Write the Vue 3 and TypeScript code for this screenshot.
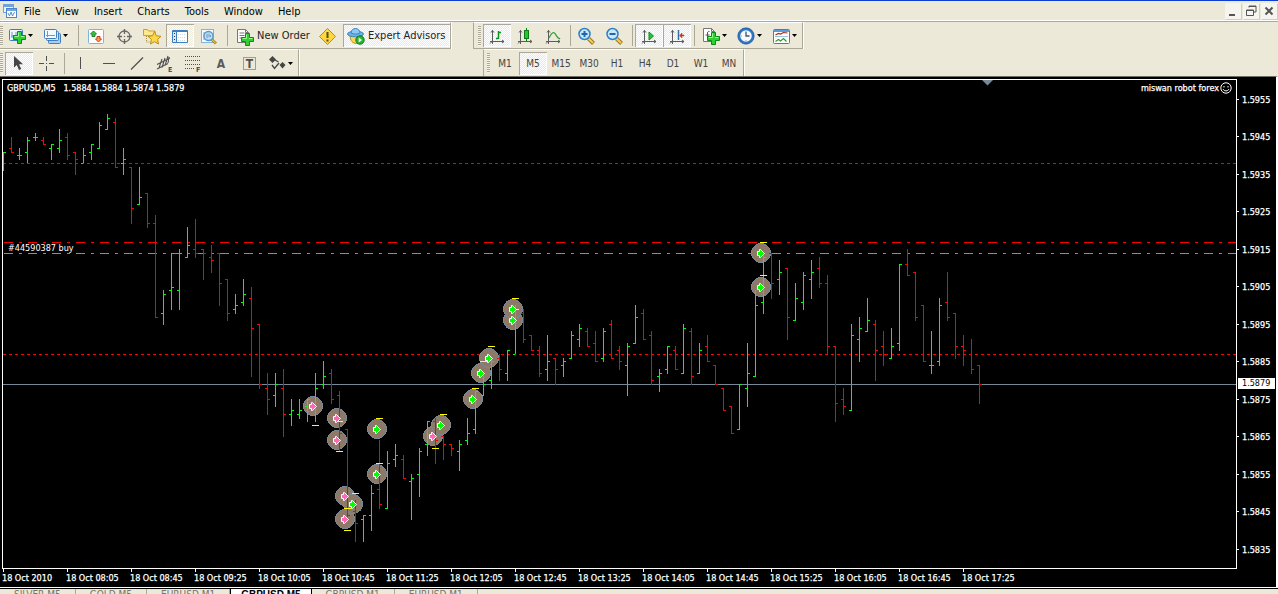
<script setup lang="ts">
interface Tool {
  icon?: string
  label?: string
  title: string
  pressed?: boolean
  menu?: boolean
  sep?: boolean
  kind?: string
}

const plus = (x: number, y: number) =>
  `<path transform="translate(${x} ${y})" d="M4.5 .5h4v4h4v4h-4v4h-4v-4h-4v-4h4z" fill="#2fd02f" stroke="#0a8a1a"/><path transform="translate(${x} ${y})" d="M5.5 1.5v4h-4M8 5.5h3.500" stroke="#9df59a" fill="none"/>`
const axes = '<path d="M5.500 4v14M3 15.500h14M4 6.500l1.500-2 1.500 2M15 14l2 1.500-2 1.500M3 17.500l2-2" stroke="#5c5c5c" fill="none"/>'
const lens = (sign: string) =>
  `<path d="M11.500 12.500l5 5" stroke="#9a7a20" stroke-width="4"/><path d="M11.500 12.500l4.500 4.500" stroke="#f3cf55" stroke-width="2"/><circle cx="7.500" cy="8" r="5.500" fill="#c9e8fb" stroke="#2f7fc4" stroke-width="1.500"/><path d="${sign}" stroke="#1f66ac" stroke-width="2"/>`

const icons: Record<string, string> = {
  app: '<rect x=".5" y=".5" width="10" height="8" fill="#eaf4ff" stroke="#6ea4dc"/><rect x="3.500" y="4.500" width="10" height="9" fill="#fff" stroke="#4a86cc"/><path d="M1 2h9M4 6h9" stroke="#4a86cc" stroke-width="1.500"/><path d="M5 9l1.500 3 1.500-4 1.500 4 2-4" stroke="#5a8fca" fill="none"/>',
  newChart: '<rect x="2.500" y="3.500" width="13" height="11" rx="1" fill="#eef7ff" stroke="#3f7fc0"/><path d="M5 6v6M4 10h9M9 6v3" stroke="#6b9cc8" fill="none"/>' + plus(6, 5),
  profiles: '<rect x="6.500" y="7.500" width="12" height="10" rx="1" fill="#a9cff0" stroke="#3f7fc0"/><rect x="4.500" y="5.500" width="12" height="9" rx="1" fill="#cfe5f8" stroke="#3f7fc0"/><rect x="2.500" y="3.500" width="12" height="9" rx="1" fill="#f2f9ff" stroke="#3f7fc0"/><path d="M5.500 5v6M4 9.500h9" stroke="#6b9cc8" fill="none"/>',
  market: '<rect x="2.500" y="3.500" width="15" height="14" rx="1" fill="#fff" stroke="#7db4e0"/><path d="M7.500 5l3 3H9v2.500H6V8H4.500z" fill="#35c440" stroke="#128a22"/><path d="M12.500 16L9.500 13H11v-2.500h3V13h1.500z" fill="#ff9a50" stroke="#d03a18"/>',
  data: '<circle cx="10.500" cy="10.500" r="5.500" fill="none" stroke="#666" stroke-width="1.300"/><path d="M10.500 3v5M10.500 13v5M3 10.500h5M13 10.500h5M10.500 10v1" stroke="#666" stroke-width="1.300"/>',
  navigator: '<path d="M1.500 9.500v-6h4l1 1.500h6.500v5z" fill="#ffe98c" stroke="#c9a02a"/><path d="M4.500 10v6h3" stroke="#a68b3a" stroke-dasharray="1 1" fill="none"/><path d="M12.500 5.500l1.900 4.300 4.600.5-3.400 3.100.9 4.600-4-2.300-4 2.300.9-4.600L6 10.300l4.600-.5z" fill="#ffd845" stroke="#b98d1c"/>',
  terminal: '<rect x="2" y="4" width="16" height="13" rx="1" fill="#3d7dc4"/><rect x="3" y="6" width="3" height="10" fill="#d6e9fa"/><rect x="7" y="6" width="10" height="10" fill="#fff"/><path d="M8 8.500h8M8 11.500h8M8 14.500h8" stroke="#c9dbea" stroke-dasharray="1 1"/><path d="M4.500 7v8" stroke="#333" stroke-dasharray="1 2"/>',
  tester: '<rect x="3.500" y="3.500" width="12" height="13" fill="#f4faff" stroke="#7db4e0"/><path d="M6 6v8M9 5v8" stroke="#88aacc"/><path d="M13 13l5 4.500" stroke="#b08a28" stroke-width="3"/><path d="M13 13l4.500 4" stroke="#f3cf55"/><circle cx="10.500" cy="10" r="4.500" fill="#b8dcf5" fill-opacity=".85" stroke="#5a94c8" stroke-width="1.300"/><path d="M9 8v4M11 7.500v4M12.500 9v2" stroke="#6c9ac0"/>',
  order: '<path d="M2.500 3.500h8l3 3v10h-11z" fill="#fff" stroke="#777"/><path d="M10.500 3.500v3h3M4.500 7h5M4.500 9.500h5M4.500 12h3" stroke="#777" fill="none"/>' + plus(6, 7),
  meta: '<path d="M10.500 2.500l8 8-8 8-8-8z" fill="#ffd840" stroke="#b98d1c" stroke-linejoin="round"/><path d="M10.500 6v6M10.500 13.500v2" stroke="#5a4a14" stroke-width="2"/>',
  advisor: '<path d="M4 9c0 6 3 8.500 6.500 8.500S16 15 16 9z" fill="#ffd650" stroke="#b98d1c"/><ellipse cx="9.500" cy="8" rx="8" ry="2.800" fill="#6cb4e8" stroke="#3a84bc"/><path d="M5 7c0-6 9-6 9 0-2 1.500-7 1.500-9 0z" fill="#8ccaf2" stroke="#3a84bc"/><circle cx="14" cy="14" r="4.200" fill="#27b52f" stroke="#0d7c18"/><path d="M12.700 11.500v5l3.300-2.500z" fill="#fff"/>',
  bars: axes + '<path d="M11.500 5v8M9 12.500h2M12 6.500h2" stroke="#0d9020" stroke-width="1.500" fill="none"/>',
  candles: axes + '<path d="M11.500 2v13" stroke="#0d7c18"/><rect x="9.500" y="4.500" width="4" height="8" fill="#27c533" stroke="#0d7c18"/>',
  line: axes + '<path d="M6 12c3-6 5-7 7-3s3 3 4 4" stroke="#2aa030" stroke-width="1.300" fill="none"/>',
  zoomIn: lens('M4.500 8h6M7.500 5v6'),
  zoomOut: lens('M4.500 8h6'),
  scroll: axes + '<path d="M10 6v8l4.500-4z" fill="#27c533" stroke="#0d8a1c"/>',
  shift: axes + '<path d="M11.500 4v10" stroke="#2a6fa8" stroke-width="1.500"/><path d="M12.500 9.500l2.500-2.500v2h2v1h-2v2z" fill="#c43c18" stroke="#c43c18" stroke-width=".5"/>',
  indicators: '<path d="M2.500 2.500h8l3 3v10h-11z" fill="#fff" stroke="#777"/><path d="M10.500 2.500v3h3" stroke="#777" fill="none"/><path d="M8.500 5.500c-2-.5-2 1-2 2.500v5M4.500 9h4" stroke="#555" fill="none"/>' + plus(6, 6),
  clock: '<circle cx="10" cy="10" r="7" fill="#f4faff" stroke="#2d74c4" stroke-width="2.500"/><circle cx="10" cy="10" r="8.200" fill="none" stroke="#1a4f94" stroke-width=".6"/><path d="M10 5.500V10h3.500" stroke="#456" stroke-width="1.300" fill="none"/><path d="M10 14v1M5 10h1" stroke="#89a"/>',
  template: '<rect x="2.500" y="3.500" width="16" height="14" rx="1" fill="#fff" stroke="#3f7fc0"/><path d="M3 5h15" stroke="#5a9ade" stroke-width="2"/><path d="M4 10.500h13" stroke="#9ac0e2"/><path d="M4.500 9l3-1.500 2 .5 3-1.500 4 .5" stroke="#a03018" fill="none" stroke-width="1.200"/><path d="M4.500 15.500l3-2 2 1.500 3-2.500 3 3" stroke="#2a9a38" fill="none" stroke-width="1.200"/>',
  cursor: '<path d="M5 3v11.500l2.800-2.500 2.200 5 2.200-1-2.200-4.800H14z" fill="#454545"/>',
  cross: '<path d="M9.500 3v5M9.500 13v5M2 10.500h5M12 10.500h5M9 10.500h1" stroke="#505050"/>',
  vline: '<path d="M9.500 4v12" stroke="#505050"/>',
  hline: '<path d="M4 10.500h12" stroke="#505050"/>',
  trend: '<path d="M4 16.500L16 4.500" stroke="#505050" stroke-width="1.200"/>',
  channel: '<path d="M2 11.500L15 5M2 16L13 10.500M4 15l3-9M7 14.500l3-9.500M10 12.500l3-9.500M13 10l1-6" stroke="#505050" stroke-width="1.100" fill="none"/><text x="13" y="19" font-size="7" font-weight="700" fill="#505050">E</text>',
  fibo: '<path d="M2 3.500h15M2 7.500h15M2 11.500h15M2 15.500h9" stroke="#505050" stroke-dasharray="1 1"/><text x="13" y="19" font-size="7" font-weight="700" fill="#505050">F</text>',
  text: '<text x="10" y="15" font-size="12" font-weight="700" text-anchor="middle" fill="#5a5a5a">A</text>',
  label: '<rect x="4.500" y="4.500" width="12" height="12" fill="none" stroke="#505050" stroke-dasharray="1 1"/><text x="10.500" y="15" font-size="12" font-weight="700" text-anchor="middle" fill="#505050">T</text>',
  arrows: '<path d="M5.500 3l3.500 3.500-3.500 3.500L2 6.500z" fill="#454545"/><path d="M15.500 9l3 3-3 3.500-3-3.500z" fill="#454545"/><path d="M8 7l3.500 2M5 12l2.500 3.500L12 10" stroke="#454545" fill="none" stroke-width="1.300"/>',
}

const sep: Tool = { title: '', sep: true }

const standard: Tool[] = [
  { icon: 'newChart', title: 'New Chart', menu: true },
  { icon: 'profiles', title: 'Profiles', menu: true },
  sep,
  { icon: 'market', title: 'Market Watch' },
  { icon: 'data', title: 'Data Window' },
  { icon: 'navigator', title: 'Navigator' },
  { icon: 'terminal', title: 'Terminal', pressed: true },
  { icon: 'tester', title: 'Strategy Tester' },
  sep,
  { icon: 'order', title: 'New Order', label: 'New Order', kind: 'order' },
  { icon: 'meta', title: 'MetaEditor' },
  { icon: 'advisor', title: 'Expert Advisors', label: 'Expert Advisors', pressed: true, kind: 'advisor' },
]

const charting: Tool[] = [
  { icon: 'bars', title: 'Bar Chart', pressed: true },
  { icon: 'candles', title: 'Candlesticks' },
  { icon: 'line', title: 'Line Chart' },
  sep,
  { icon: 'zoomIn', title: 'Zoom In' },
  { icon: 'zoomOut', title: 'Zoom Out' },
  sep,
  { icon: 'scroll', title: 'Auto Scroll', pressed: true },
  { icon: 'shift', title: 'Chart Shift', pressed: true },
  sep,
  { icon: 'indicators', title: 'Indicators', menu: true },
  { icon: 'clock', title: 'Periods', menu: true },
  { icon: 'template', title: 'Templates', menu: true },
]

const drawing: Tool[] = [
  { icon: 'cursor', title: 'Cursor', pressed: true },
  { icon: 'cross', title: 'Crosshair' },
  sep,
  { icon: 'vline', title: 'Vertical Line' },
  { icon: 'hline', title: 'Horizontal Line' },
  { icon: 'trend', title: 'Trendline' },
  { icon: 'channel', title: 'Equidistant Channel' },
  { icon: 'fibo', title: 'Fibonacci Retracement' },
  { icon: 'text', title: 'Text' },
  { icon: 'label', title: 'Text Label' },
  { icon: 'arrows', title: 'Arrows', menu: true },
]

const periods: Tool[] = ['M1', 'M5', 'M15', 'M30', 'H1', 'H4', 'D1', 'W1', 'MN'].map(p => ({
  title: p,
  label: p,
  pressed: p === 'M5',
  kind: 'period',
}))

const rows = [
  [
    { name: 'standard', tools: standard },
    { name: 'charting', tools: charting },
  ],
  [
    { name: 'drawing', tools: drawing },
    { name: 'periods', tools: periods },
  ],
]

const menus = ['File', 'View', 'Insert', 'Charts', 'Tools', 'Window', 'Help']

// high, low, open, close: vertical positions on the chart canvas
const quotes: number[][] = [
  [152, 170, 170, 152], [137, 152, 148, 152], [148, 159, 155, 155], [137, 162, 152, 140], [133, 140, 137, 137],
  [137, 144, 140, 144], [144, 159, 148, 144], [129, 152, 148, 140], [133, 159, 137, 155], [152, 174, 152, 159],
  [148, 162, 163, 155], [144, 159, 152, 144], [122, 148, 148, 125], [114, 129, 129, 118], [118, 167, 122, 167],
  [148, 174, 163, 159], [167, 223, 167, 208], [167, 204, 204, 197], [193, 227, 193, 223], [215, 317, 223, 317],
  [290, 324, 313, 294], [253, 309, 290, 287], [249, 309, 290, 253], [227, 257, 257, 245], [219, 257, 249, 253],
  [249, 279, 249, 253], [245, 272, 257, 260], [253, 305, 253, 283], [279, 320, 279, 313], [294, 313, 309, 305],
  [279, 305, 302, 294], [287, 376, 298, 328], [324, 388, 324, 384], [373, 414, 388, 399], [373, 406, 395, 384],
  [369, 436, 388, 414], [399, 425, 414, 410], [399, 418, 414, 410], [399, 421, 406, 399], [373, 421, 406, 388],
  [361, 388, 384, 376], [369, 403, 373, 399], [391, 450, 395, 433], [429, 516, 429, 515], [500, 541, 511, 523],
  [515, 541, 519, 515], [485, 530, 515, 493], [440, 508, 489, 504], [451, 508, 508, 463], [444, 466, 459, 455],
  [455, 478, 459, 478], [474, 519, 481, 478], [448, 496, 474, 451], [421, 455, 444, 421], [418, 463, 421, 440],
  [436, 459, 436, 444], [444, 455, 444, 448], [440, 470, 451, 444], [418, 444, 440, 433], [391, 433, 429, 391],
  [375, 395, 395, 384], [360, 388, 380, 361], [354, 380, 358, 369], [350, 380, 373, 350], [305, 353, 354, 309],
  [309, 342, 313, 339], [335, 350, 335, 350], [346, 376, 350, 373], [335, 380, 369, 361], [358, 384, 358, 369],
  [358, 376, 365, 361], [331, 358, 358, 335], [324, 346, 339, 328], [328, 346, 331, 346], [331, 361, 343, 361],
  [328, 361, 358, 331], [320, 358, 324, 358], [346, 369, 350, 361], [343, 395, 365, 346], [305, 343, 343, 317],
  [309, 339, 313, 339], [331, 384, 335, 380], [369, 391, 376, 373], [346, 373, 369, 346], [346, 369, 350, 369],
  [324, 373, 373, 328], [328, 384, 331, 376], [343, 373, 373, 350], [335, 361, 346, 361], [365, 384, 365, 384],
  [388, 410, 388, 410], [406, 433, 406, 433], [384, 429, 429, 384], [343, 406, 388, 373], [290, 376, 376, 305],
  [255, 313, 302, 257], [253, 298, 253, 283], [260, 294, 279, 272], [268, 339, 268, 317], [283, 320, 320, 298],
  [272, 309, 302, 275], [260, 298, 279, 272], [257, 287, 268, 283], [275, 354, 283, 346], [346, 421, 346, 403],
  [388, 414, 399, 406], [324, 410, 410, 335], [317, 361, 339, 328], [298, 331, 331, 320], [320, 380, 324, 350],
  [331, 365, 346, 354], [328, 358, 358, 346], [264, 350, 343, 264], [249, 275, 264, 275], [272, 320, 272, 317],
  [305, 361, 305, 361], [331, 373, 365, 365], [298, 365, 361, 305], [272, 320, 302, 317], [313, 358, 313, 346],
  [335, 365, 346, 350], [339, 373, 354, 369], [365, 403, 365, 384],
]

const barPath = (up: boolean) =>
  quotes
    .map(([h, l, o, c], i) => {
      if (c <= o !== up) return ''
      const x = 3 + i * 8
      return `M${x} ${h}h1V${l + 1}h-1zM${x - 2} ${o}h2v1h-2zM${x + 1} ${c}h2v1h-2z`
    })
    .join('')

const upBars = barPath(true)
const downBars = barPath(false)

const signals: [number, number, 'buy' | 'sell'][] = [
  [313, 406, 'sell'], [337, 418, 'sell'], [337, 440, 'sell'], [377, 429, 'buy'], [377, 474, 'buy'],
  [345, 496, 'sell'], [345, 519, 'sell'], [353, 504, 'buy'], [433, 436, 'sell'], [441, 425, 'buy'],
  [473, 399, 'buy'], [481, 373, 'buy'], [489, 358, 'buy'], [513, 320, 'buy'], [513, 309, 'buy'],
  [761, 253, 'buy'], [761, 287, 'buy'],
]

const levels: [number, number][] = [
  [315, 425], [339, 421], [339, 451], [379, 418], [379, 463], [355, 493], [347, 508], [347, 530], [435, 448],
  [443, 414], [475, 388], [483, 361], [491, 346], [515, 298], [515, 309], [763, 242], [763, 275],
]
const levelPath = levels.map(([x, y]) => `M${x - 3} ${y}h7v1h-7z`).join('')

const priceTop = (p: number) => Math.round(20 + (1.5955 - p) * 37500)
const prices = Array.from({ length: 13 }, (_, i) => 1.5955 - i * 0.001)

const times = ['2010', '08:05', '08:45', '09:25', '10:05', '10:45', '11:25', '12:05', '12:45', '13:25', '14:05', '14:45', '15:25', '16:05', '16:45', '17:25']

const tabs = ['SILVER,M5', 'GOLD,M5', 'EURUSD,M1', 'GBPUSD,M5', 'GBPUSD,M1', 'EURUSD,M1']
</script>

<template>
  <div class="terminal">
    <header class="menubar">
      <svg class="app-icon" width="14" height="14" v-html="icons.app" />
      <nav class="menus">
        <button v-for="m in menus" :key="m" type="button" class="menu">{{ m }}</button>
      </nav>
      <div class="window-buttons">
        <button type="button" aria-label="Minimize"><svg width="16" height="16"><path d="M4 11h6v2H4z" fill="#555" /></svg></button>
        <button type="button" aria-label="Restore"><svg width="16" height="16"><path d="M6 4.500V3h7v6h-2M3.500 7h7v5.500h-7z M3.500 7.500h7M6 3.500h7" fill="none" stroke="#555" /></svg></button>
        <button type="button" aria-label="Close"><svg width="16" height="16"><path d="M4.500 4.500l7 7M11.500 4.500l-7 7" stroke="#555" stroke-width="2" /></svg></button>
      </div>
    </header>

    <div v-for="(row, r) in rows" :key="r" class="toolrow">
      <div v-for="bar in row" :key="bar.name" class="toolbar" :class="bar.name" role="toolbar">
        <span class="grip"></span>
        <template v-for="(t, i) in bar.tools" :key="i">
          <span v-if="t.sep" class="sep"></span>
          <button v-else type="button" class="tool" :class="[t.kind, { pressed: t.pressed, drop: t.menu }]" :aria-label="t.title">
            <svg v-if="t.icon" width="20" height="20" v-html="icons[t.icon]" />
            <span v-if="t.label">{{ t.label }}</span>
            <svg v-if="t.menu" class="caret" width="5" height="3"><path d="M0 0h5L2.500 3z" /></svg>
          </button>
        </template>
      </div>
    </div>

    <main class="chart">
      <div class="plot">
        <svg class="canvas" width="100%" height="100%">
          <g transform="translate(-3 -80)">
            <g class="lines">
              <path class="stop" d="M3 163.500H3000M3 354.500H3000" stroke-dasharray="3 3" />
              <path class="stop" d="M4 242.500H3000" stroke-dasharray="9 6 3 6" />
              <path class="entry" d="M4 253.500H3000" stroke-dasharray="9 6 3 6" />
              <path class="bid" d="M3 384.500H3000" />
            </g>
            <g class="crisp">
              <circle v-for="([x, y], i) in signals" :key="i" class="halo" :cx="x" :cy="y" r="9.500" />
              <path :d="upBars" fill="#00ff00" />
              <path :d="downBars" fill="#ff0000" />
              <path :d="levelPath" fill="#ffff00" />
            </g>
            <path
              v-for="([x, y, side], i) in signals"
              :key="i"
              class="arrow"
              :class="side"
              :transform="`translate(${x} ${y + 0.5})`"
              d="M-3.500 -2h2v-2h1l4 4-4 4h-1v-2h-2z"
            />
            <path d="M982 80h11l-5.500 5.500z" fill="#778899" />
            <text class="order-label" x="8" y="251">#44590387 buy</text>
          </g>
        </svg>
        <div class="caption">
          <span class="symbol">GBPUSD,M5&nbsp;&nbsp; 1.5884 1.5884 1.5874 1.5879</span>
          <span class="expert">
            miswan robot forex
            <svg width="12" height="12"><circle cx="6" cy="6" r="5.200" fill="none" stroke="#fff" /><path d="M4 4v1.500M8 4v1.500M3 7c1 2.500 5 2.500 6 0" stroke="#fff" fill="none" /></svg>
          </span>
        </div>
      </div>
      <div class="prices">
        <span v-for="p in prices" :key="p" class="price" :style="{ top: priceTop(p) + 'px' }">{{ p.toFixed(4) }}</span>
        <span class="price current" :style="{ top: priceTop(1.5879) + 'px' }">1.5879</span>
      </div>
      <div class="times">
        <span v-for="t in times" :key="t" class="time">18 Oct {{ t }}</span>
      </div>
    </main>

    <footer class="tabs">
      <button v-for="(t, i) in tabs" :key="i" type="button" class="tab" :class="{ active: i === 3 }">{{ t }}</button>
    </footer>
  </div>
</template>

<style>
body {
  margin: 0;
  overflow: hidden;
}
</style>

<style scoped>
.terminal {
  display: flex;
  flex-direction: column;
  height: 100vh;
  background: #ece9d8;
  font-family: "DejaVu Sans Condensed", "Noto Sans", sans-serif;
  font-size: 10px;
  color: #000;
}
button {
  margin: 0;
  padding: 0;
  border: 0;
  background: none;
  font: inherit;
  color: inherit;
  box-sizing: border-box;
}
svg {
  display: block;
  flex: none;
}
.menubar {
  display: flex;
  align-items: center;
  box-sizing: border-box;
  height: 22px;
  padding-left: 3px;
  border-top: 1px solid #0a3fd0;
  border-bottom: 1px solid #aca899;
  box-shadow: inset 0 -1px #fff;
}
.menus {
  display: flex;
  flex: 1;
}
.menu {
  padding: 1px 8px 0 7px;
  font-size: 11px;
  line-height: 18px;
}
.window-buttons {
  display: flex;
  gap: 2px;
  padding-right: 1px;
}
.window-buttons button {
  width: 16px;
  height: 16px;
  background: #f6f4ee;
  box-shadow: 1px 1px #d2cebd;
}
.toolrow {
  display: flex;
  height: 27px;
}
.toolbar {
  display: flex;
  align-items: center;
  box-sizing: border-box;
  height: 27px;
  border-top: 1px solid #fff;
  border-right: 1px solid #aca899;
  border-bottom: 1px solid #aca899;
  box-shadow: 1px 0 #fff;
}
.charting {
  margin-left: 22px;
  padding-left: 4px;
  border-left: 1px solid #aca899;
}
.periods {
  margin-left: 184px;
  padding-left: 3px;
  border-left: 1px solid #aca899;
}
.drawing,
.periods {
  border-bottom: 0;
}
.grip {
  width: 3px;
  height: 20px;
  background: repeating-linear-gradient(#aca899 0 1px, #f6f4ea 1px 2px);
}
.charting .grip,
.drawing .grip {
  margin-right: 2px;
}
.periods .grip {
  margin-right: 1px;
}
.sep {
  width: 9px;
  height: 21px;
  background: linear-gradient(#aca899, #aca899) 5px 0 / 1px 100% no-repeat;
}
.charting .sep,
.drawing .sep {
  width: 6px;
  background-position-x: 3px;
}
.tool {
  display: flex;
  align-items: center;
  justify-content: center;
  width: 28px;
  height: 23px;
  color: #222;
}
.tool.drop {
  width: 35px;
  justify-content: flex-start;
  padding-left: 4px;
  gap: 1px;
}
.tool.order,
.tool.advisor {
  justify-content: flex-start;
  gap: 2px;
  white-space: nowrap;
}
.tool.order {
  width: 82px;
  padding-left: 4px;
  font-size: 11px;
}
.tool.advisor {
  width: 107px;
  margin-left: 2px;
  padding-left: 3px;
  font-size: 11px;
}
.tool.period {
  color: #444;
}
.pressed {
  background: repeating-conic-gradient(#fff 0 25%, #ece9d8 0 50%) 0 0 / 2px 2px;
  box-shadow: inset 1px 1px #aca899, inset -1px -1px #fff;
}
.chart {
  flex: 1;
  min-height: 0;
  display: grid;
  grid-template-columns: 1fr 39px;
  grid-template-rows: 1fr 19px;
  padding: 2px 0 0 2px;
  border-top: 1px solid #716f64;
  border-right: 2px solid #fff;
  background: #000;
  color: #fff;
  font-size: 9px;
  -webkit-text-stroke: 0.25px #fff;
}
.plot {
  position: relative;
  min-height: 0;
  border: 1px solid #fff;
  overflow: hidden;
}
.canvas {
  position: absolute;
  inset: 0;
}
.lines path {
  fill: none;
}
.stop {
  stroke: #ff0000;
}
.entry {
  stroke: #32cd32;
}
.bid {
  stroke: #778899;
}
.crisp {
  shape-rendering: crispEdges;
}
.halo {
  fill: #8e7969;
  stroke: #778899;
}
.arrow {
  stroke: #fff;
  stroke-width: 1;
}
.buy {
  fill: #00ff00;
}
.sell {
  fill: #ff69b4;
}
.order-label {
  fill: #fff;
}
.caption {
  position: relative;
  display: flex;
  justify-content: space-between;
  padding: 2px 4px;
  line-height: 12px;
}
.expert {
  display: flex;
  align-items: center;
  gap: 1px;
}
.prices {
  position: relative;
}
.price {
  position: absolute;
  left: 0;
  right: 0;
  padding-left: 5px;
  line-height: 10px;
  margin-top: -4px;
}
.price::before {
  content: "";
  position: absolute;
  left: 0;
  top: 4px;
  width: 2px;
  height: 1px;
  background: #fff;
}
.price.current {
  left: 1px;
  right: 1px;
  padding-left: 4px;
  margin-top: -6px;
  line-height: 11px;
  background: #fff;
  color: #000;
  -webkit-text-stroke: 0;
}
.times {
  grid-column: 1 / -1;
  display: flex;
  overflow: hidden;
}
.time {
  position: relative;
  flex: 0 0 64px;
  line-height: 18px;
  white-space: nowrap;
}
.time::before {
  content: "";
  position: absolute;
  left: 1px;
  top: 0;
  width: 1px;
  height: 3px;
  background: #fff;
}
.tabs {
  display: flex;
  flex: 0 0 5px;
  overflow: hidden;
  border-top: 1px solid #000;
  box-shadow: 0 -1px #fff;
  color: #777466;
}
.tab {
  flex: none;
  height: 18px;
  padding: 0 14px 6px;
  border-right: 1px solid #aca899;
  line-height: 12px;
  white-space: nowrap;
}
.tab.active {
  padding: 0 10px 6px;
  background: #fff;
  border-left: 1px solid #000;
  border-right: 1px solid #000;
  color: #000;
  font-family: "Liberation Sans", sans-serif;
  font-weight: 700;
}
</style>
